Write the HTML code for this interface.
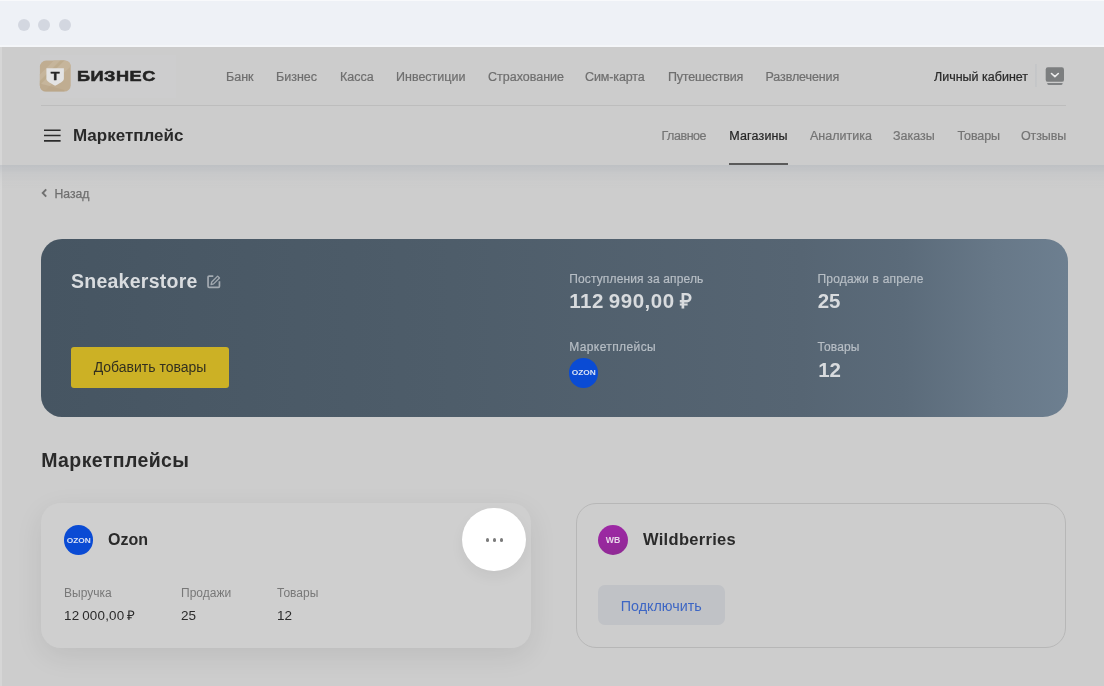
<!DOCTYPE html>
<html lang="ru">
<head>
<meta charset="utf-8">
<title>Маркетплейс</title>
<style>
*{box-sizing:border-box;margin:0;padding:0}
html,body{width:1104px;height:686px;overflow:hidden}
body{background:#cdcdcd;font-family:"Liberation Sans",sans-serif;color:#2b2b2b;position:relative}
#w{position:absolute;left:0;top:0;width:1104px;height:686px;will-change:transform}
.abs{position:absolute;white-space:nowrap}
.titlebar{position:absolute;left:0;top:0;width:1104px;height:47px;background:#eef1f6;border-top:1px solid #f8f9fb;border-bottom:2px solid #f4f6f9}
.dot{position:absolute;top:18.300px;width:12px;height:12px;border-radius:50%;background:#d3d7e0}
.header{position:absolute;left:0;top:47px;width:1104px;height:117.500px;background:#cccccc}
.hshadow{position:absolute;left:0;top:164.500px;width:1104px;height:24px;background:linear-gradient(180deg,rgba(170,176,184,.42) 0%,rgba(180,184,190,.22) 35%,rgba(190,192,196,.08) 70%,rgba(200,200,200,0) 100%)}
.leftstrip{position:absolute;left:0;top:47px;width:2px;height:639px;background:#d6d6d6}
.topnav a{position:absolute;top:70px;font-size:12.500px;color:#6f6f6f;line-height:15px;white-space:nowrap;-webkit-text-stroke:.22px}
.subnav a{position:absolute;top:129px;font-size:12.500px;color:#747474;line-height:15px;white-space:nowrap;-webkit-text-stroke:.22px}
.subnav a.act{color:#262626}
.hr{position:absolute;left:41px;top:104.500px;width:1025px;height:1px;background:#bdbdbd}
.hero{position:absolute;left:41.200px;top:238.800px;width:1027.300px;height:178.400px;border-radius:21px 22.500px 25px 21px;background:linear-gradient(90deg,#465562 0%,#4e5d6a 40%,#566573 74%,#5b6b7a 84%,#677888 93%,#6d7f90 100%)}
.hero .lbl{position:absolute;font-size:12px;color:#b7bec5;line-height:14px;white-space:nowrap;-webkit-text-stroke:.2px #b7bec5}
.hero .val{position:absolute;font-size:20.500px;font-weight:700;color:#d8dbde;line-height:24px;white-space:nowrap}
.btn-y{position:absolute;left:71px;top:346.800px;width:158px;height:41px;border-radius:3px;background:#ccb125;color:#33301f;font-size:14px;line-height:41px;text-align:center}
.card1{position:absolute;left:41px;top:503px;width:490px;height:145px;border-radius:20px;background:#cfcfcf;box-shadow:0 8px 28px rgba(0,0,0,.08)}
.card2{position:absolute;left:576px;top:503px;width:490px;height:145px;border-radius:20px;border:1px solid #b7b7b7;background:#cdcdcd}
.circ{position:absolute;border-radius:50%}
.btn-g{position:absolute;left:598px;top:584.500px;width:126.500px;height:40.500px;border-radius:7px;background:#c0c2c6;color:#3d66c4;font-size:14.300px;line-height:42.500px;text-align:center}
</style>
</head>
<body>
<div id="w">
<div class="titlebar">
  <span class="dot" style="left:17.6px"></span>
  <span class="dot" style="left:38.4px"></span>
  <span class="dot" style="left:59.2px"></span>
</div>
<div class="header"></div>
<div class="leftstrip"></div>
<div class="hshadow"></div>
<div class="abs" style="left:40px;top:55px;width:135.500px;height:43px;background:#cdcdce"></div>

<!-- logo -->
<svg class="abs" style="left:39px;top:60px" width="33" height="33" viewBox="0 0 33 33">
  <g transform="translate(.9 .55)">
    <rect x="0" y="0" width="30.800" height="31" rx="6.300" fill="#c0ad91"/>
    <path d="M14 0H24.500Q30.800 0 30.800 6L6 29.300Q0 30 0 24.700V14z" fill="#c6b59b"/>
    <path d="M20.500 0H24.500L0 24.500V20.500z" fill="#bba889" opacity=".7"/>
    <path d="M0 23L24.500 29.400V31H6.300Q0 31 0 24.700z" fill="#b7a385" opacity=".6"/>
    <path d="M6.500 7.700h17.500v10.300c0 2.300-1.700 3.600-8.750 7.100c-7.050-3.500-8.750-4.800-8.750-7.100z" fill="#e3e3e3"/>
    <text transform="translate(15.250 19.300) scale(1.450 1)" font-family="Liberation Sans,sans-serif" font-weight="700" font-size="10" text-anchor="middle" fill="#262626" stroke="#262626" stroke-width=".3">Т</text>
  </g>
</svg>
<div class="abs" id="biz" style="left:76.500px;top:66.100px;font-size:14.3px;font-weight:700;line-height:20px;color:#232323;transform-origin:0 50%;transform:scaleX(1.27);letter-spacing:.4px;-webkit-text-stroke:.5px #232323">БИЗНЕС</div>

<div class="topnav">
  <a style="left:226px">Банк</a>
  <a style="left:276px">Бизнес</a>
  <a style="left:340px">Касса</a>
  <a style="left:396px">Инвестиции</a>
  <a style="left:488px">Страхование</a>
  <a style="left:585px;letter-spacing:-.11px">Сим-карта</a>
  <a style="left:668px;letter-spacing:-.18px">Путешествия</a>
  <a style="left:765.500px;letter-spacing:-.11px">Развлечения</a>
  <a style="left:934px;color:#2a2a2a">Личный кабинет</a>
</div>
<div class="abs" style="left:1035px;top:64px;width:2px;height:23px;background:linear-gradient(90deg,#c7c8ca 0%,#c2c4c6 50%,#c9cacb 100%)"></div>
<svg class="abs" style="left:1045px;top:67px" width="20" height="19" viewBox="0 0 20 19">
  <rect x=".7" y=".25" width="18.300" height="14.600" rx="2.200" fill="#7c7e7f"/>
  <path d="M2.200 15.900h15.400v.6q0 1.400-1.400 1.400h-12.600q-1.400 0-1.400-1.400z" fill="#808284"/>
  <path d="M6.500 6.500L9.900 9.600L13.300 6.500" stroke="#ececec" stroke-width="1.650" fill="none" stroke-linecap="round" stroke-linejoin="round"/>
</svg>
<div class="hr"></div>

<!-- hamburger -->
<svg class="abs" style="left:44px;top:128px" width="17" height="16" viewBox="0 0 17 16">
  <path d="M0 2.200h16.600M0 7.550h16.600M0 12.850h16.600" stroke="#2b2b2b" stroke-width="1.600"/>
</svg>
<div class="abs" id="mp" style="left:73px;top:126px;font-size:17px;font-weight:700;line-height:20px;color:#2a2a2a">Маркетплейс</div>

<div class="subnav">
  <a style="left:661.5px;letter-spacing:-.45px">Главное</a>
  <a class="act" style="left:729.300px;letter-spacing:.15px">Магазины</a>
  <a style="left:810px">Аналитика</a>
  <a style="left:893px">Заказы</a>
  <a style="left:957.500px;letter-spacing:-.1px">Товары</a>
  <a style="left:1021px;letter-spacing:-.12px">Отзывы</a>
</div>
<div class="abs" style="left:729px;top:162.5px;width:58.5px;height:2px;background:#5a5a5a"></div>

<!-- back -->
<svg class="abs" style="left:41px;top:188px" width="6" height="10" viewBox="0 0 6 10">
  <path d="M5.200 1.300L1.700 5L5.200 8.700" stroke="#707070" stroke-width="1.900" fill="none"/>
</svg>
<div class="abs" id="back" style="left:54.500px;top:186.500px;font-size:12.200px;line-height:14px;color:#6f6f6f;-webkit-text-stroke:.25px #6f6f6f">Назад</div>

<!-- hero -->
<div class="hero"></div>
<div class="abs" id="sneak" style="left:71px;top:269.300px;font-size:19.500px;font-weight:700;line-height:24px;color:#d9dcdf;letter-spacing:.25px">Sneakerstore</div>
<svg class="abs" style="left:206px;top:274px" width="16" height="16" viewBox="0 0 16 16">
  <path d="M7.300 2.150H3.200Q2.050 2.150 2.050 3.300V12.250Q2.050 13.400 3.200 13.400H12.300Q13.450 13.400 13.450 12.250V7.300" stroke="#a3aab1" stroke-width="1.700" fill="none"/>
  <path d="M5.100 10.500L5.700 8L11.600 2.100L13.500 4L7.600 9.900Z" stroke="#a3aab1" stroke-width="1.300" fill="none" stroke-linejoin="round"/>
</svg>
<div class="btn-y">Добавить товары</div>

<div class="hero" style="background:none">
  <div class="lbl" style="left:528px;top:32.800px;letter-spacing:.15px">Поступления за апрель</div>
  <div class="val" style="left:528px;top:50.650px;letter-spacing:.55px;word-spacing:-1.400px">112 990,00 ₽</div>
  <div class="lbl" style="left:776.300px;top:32.800px;letter-spacing:.2px">Продажи в апреле</div>
  <div class="val" style="left:776.500px;top:50.650px">25</div>
  <div class="lbl" style="left:528px;top:101.600px;letter-spacing:.4px">Маркетплейсы</div>
  <div class="lbl" style="left:776.300px;top:101.600px;letter-spacing:.13px">Товары</div>
  <div class="val" style="left:777px;top:119.400px">12</div>
</div>
<div class="circ" style="left:568.750px;top:358.200px;width:29.500px;height:29.500px;background:#0a4bd4"></div>
<div class="abs" style="left:568.750px;top:358.200px;width:29.500px;height:29.500px;line-height:30.500px;text-align:center;font-size:7.200px;font-weight:700;color:#dbe3f5;transform:scaleX(1.160)">OZON</div>

<div class="abs" id="mps" style="left:41.200px;top:447.800px;font-size:19.500px;font-weight:700;line-height:24px;color:#2a2a2a;letter-spacing:.4px">Маркетплейсы</div>

<!-- card 1 -->
<div class="card1"></div>
<div class="circ" style="left:63.500px;top:524.500px;width:29.500px;height:30px;background:#0a4bd4"></div>
<div class="abs" style="left:63.500px;top:524.500px;width:29.500px;height:30px;line-height:31px;text-align:center;font-size:7.200px;font-weight:700;color:#dbe3f5;transform:scaleX(1.160)">OZON</div>
<div class="abs" id="ozon" style="left:108px;top:530px;font-size:16px;font-weight:700;line-height:20px;color:#2a2a2a">Ozon</div>
<div class="circ" style="left:462px;top:507.500px;width:63.500px;height:63.500px;background:#ffffff;box-shadow:0 6px 14px rgba(0,0,0,.05)"></div>
<div class="circ" style="left:485.500px;top:538.300px;width:3.800px;height:3.800px;background:#7c7c7c"></div>
<div class="circ" style="left:492.600px;top:538.300px;width:3.800px;height:3.800px;background:#7c7c7c"></div>
<div class="circ" style="left:499.700px;top:538.300px;width:3.800px;height:3.800px;background:#7c7c7c"></div>

<div class="abs" style="left:64px;top:586px;font-size:12px;line-height:14px;color:#787878">Выручка</div>
<div class="abs" style="left:181px;top:586px;font-size:12px;line-height:14px;color:#787878">Продажи</div>
<div class="abs" style="left:277px;top:586px;font-size:12px;line-height:14px;color:#787878">Товары</div>
<div class="abs" style="left:64px;top:608px;font-size:13.400px;line-height:16px;color:#2b2b2b;letter-spacing:.2px;word-spacing:-1px">12 000,00 ₽</div>
<div class="abs" style="left:181px;top:608px;font-size:13.500px;line-height:16px;color:#2b2b2b">25</div>
<div class="abs" style="left:277px;top:608px;font-size:13.500px;line-height:16px;color:#2b2b2b">12</div>

<!-- card 2 -->
<div class="card2"></div>
<div class="circ" style="left:598px;top:525px;width:30px;height:30px;background:linear-gradient(165deg,#9e28a6 0%,#97289d 55%,#8d2a92 100%)"></div>
<div class="abs" style="left:598px;top:525px;width:30px;height:30px;line-height:30px;text-align:center;font-size:8.700px;font-weight:700;color:#e8d8ea">WB</div>
<div class="abs" id="wb" style="left:643px;top:529.200px;font-size:16.500px;font-weight:700;line-height:20px;color:#2a2a2a;letter-spacing:.3px">Wildberries</div>
<div class="btn-g">Подключить</div>
</div>
</body>
</html>
